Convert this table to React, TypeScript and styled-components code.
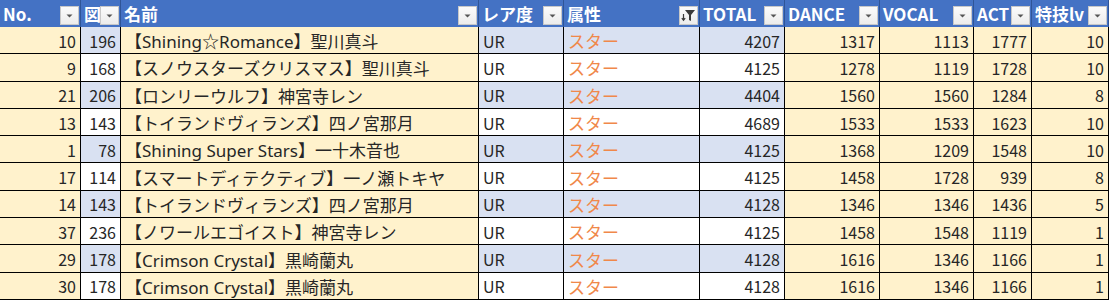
import styled, { createGlobalStyle } from "styled-components";

const GlobalStyle = createGlobalStyle`
  body {
    margin: 0;
    background: #ffffff;
    font-family: "Noto Sans CJK JP", "Noto Sans", sans-serif;
  }
`;

const COLS = [81, 40, 358, 85, 136, 85, 95, 94, 58, 77];

type Kind = "warm" | "band";

interface IColumn {
  title: string;
  kind: Kind;
  align: "left" | "right";
  filtered?: boolean;
  wide?: boolean;
}

const columns: IColumn[] = [
  { title: "No.", kind: "warm", align: "right" },
  { title: "図", kind: "band", align: "right" },
  { title: "名前", kind: "warm", align: "left", wide: true },
  { title: "レア度", kind: "band", align: "left" },
  { title: "属性", kind: "band", align: "left", filtered: true, wide: true },
  { title: "TOTAL", kind: "band", align: "right" },
  { title: "DANCE", kind: "warm", align: "right" },
  { title: "VOCAL", kind: "warm", align: "right" },
  { title: "ACT", kind: "warm", align: "right" },
  { title: "特技lv", kind: "warm", align: "right" },
];

const rows: (string | number)[][] = [
  [10, 196, "【Shining☆Romance】聖川真斗", "UR", "スター", 4207, 1317, 1113, 1777, 10],
  [9, 168, "【スノウスターズクリスマス】聖川真斗", "UR", "スター", 4125, 1278, 1119, 1728, 10],
  [21, 206, "【ロンリーウルフ】神宮寺レン", "UR", "スター", 4404, 1560, 1560, 1284, 8],
  [13, 143, "【トイランドヴィランズ】四ノ宮那月", "UR", "スター", 4689, 1533, 1533, 1623, 10],
  [1, 78, "【Shining Super Stars】一十木音也", "UR", "スター", 4125, 1368, 1209, 1548, 10],
  [17, 114, "【スマートディテクティブ】一ノ瀬トキヤ", "UR", "スター", 4125, 1458, 1728, 939, 8],
  [14, 143, "【トイランドヴィランズ】四ノ宮那月", "UR", "スター", 4128, 1346, 1346, 1436, 5],
  [37, 236, "【ノワールエゴイスト】神宮寺レン", "UR", "スター", 4125, 1458, 1548, 1119, 1],
  [29, 178, "【Crimson Crystal】黒崎蘭丸", "UR", "スター", 4128, 1616, 1346, 1166, 1],
  [30, 178, "【Crimson Crystal】黒崎蘭丸", "UR", "スター", 4128, 1616, 1346, 1166, 1],
];

const Sheet = styled.div`
  display: grid;
  grid-template-columns: ${COLS.map((w) => `${w}px`).join(" ")};
  grid-template-rows: 27px;
  grid-auto-rows: 27.3px;
  width: 1109px;
`;

const HeaderCell = styled.div`
  position: relative;
  box-sizing: border-box;
  display: flex;
  align-items: center;
  padding-left: 3px;
  background: #4472c4;
  border-right: 1px solid #2f5597;
  color: #ffffff;
  font-weight: 700;
  font-size: 17px;
  white-space: nowrap;
  overflow: hidden;
`;

const HeaderLabel = styled.span`
  font-family: "Noto Sans CJK JP", "Noto Sans", sans-serif;
  line-height: 1;
`;

const FilterButton = styled.span`
  position: absolute;
  right: 1px;
  bottom: 2px;
  width: 19px;
  height: 19px;
  box-sizing: border-box;
  display: flex;
  align-items: center;
  justify-content: center;
  background: linear-gradient(#fbfbfb, #ececec);
  border: 1px solid #c8c8c8;
`;

const Cell = styled.div<{
  $bg: string;
  $align: "left" | "right";
  $accent?: boolean;
  $wide?: boolean;
}>`
  box-sizing: border-box;
  display: flex;
  align-items: center;
  justify-content: ${(p) => (p.$align === "right" ? "flex-end" : "flex-start")};
  padding: 1px 4px 0 4px;
  background: ${(p) => p.$bg};
  border-right: 1px solid #000000;
  border-bottom: 1px solid #000000;
  color: ${(p) => (p.$accent ? "#f0884a" : "#262626")};
  font-family: ${(p) =>
    p.$wide
      ? `"Noto Sans", "Noto Sans CJK JP", sans-serif`
      : `"Noto Sans CJK JP", "Noto Sans", sans-serif`};
  font-size: ${(p) => (p.$wide ? "17px" : "16px")};
  white-space: nowrap;
  overflow: hidden;
`;

function DropArrow() {
  return (
    <svg width="9" height="6" viewBox="0 0 9 6">
      <path d="M1.5 1.5h6L4.5 4.5z" fill="#555" />
    </svg>
  );
}

function FunnelIcon() {
  return (
    <svg width="15" height="13" viewBox="0 0 15 13">
      <path d="M4 1h10L10 6v6l-2-1V6z" fill="#3a3a3a" />
      <path d="M2.5 5v6M0.8 9.2l1.7 2 1.7-2" stroke="#3a3a3a" strokeWidth="1.2" fill="none" />
    </svg>
  );
}

function cellBg(kind: Kind, rowIndex: number) {
  if (kind === "warm") return "#fff2cc";
  return rowIndex % 2 === 0 ? "#d9e1f2" : "#ffffff";
}

function App() {
  return (
    <>
      <GlobalStyle />
      <Sheet>
        {columns.map((col) => (
          <HeaderCell key={col.title}>
            <HeaderLabel>{col.title}</HeaderLabel>
            <FilterButton>{col.filtered ? <FunnelIcon /> : <DropArrow />}</FilterButton>
          </HeaderCell>
        ))}
        {rows.map((row, r) =>
          row.map((value, c) => (
            <Cell
              key={`${r}-${c}`}
              $bg={cellBg(columns[c].kind, r)}
              $align={columns[c].align}
              $accent={c === 4}
              $wide={columns[c].wide}
            >
              {value}
            </Cell>
          ))
        )}
      </Sheet>
    </>
  );
}

export default App;
